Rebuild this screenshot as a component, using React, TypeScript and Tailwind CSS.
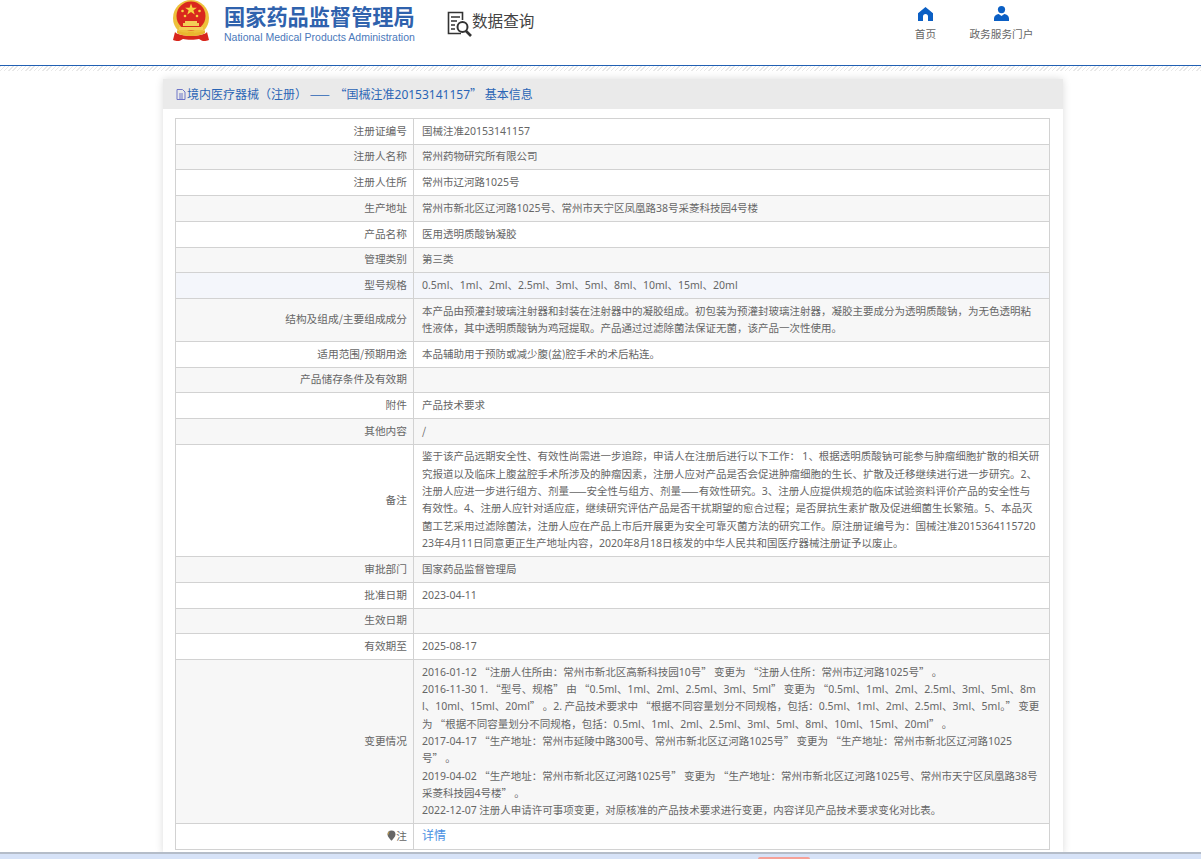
import React from 'react';

const font = { fontFamily: '"Noto Sans CJK SC", sans-serif' };

type Row = { label: React.ReactNode; lines: string[]; bg?: string; link?: boolean };

const rows: Row[] = [
  { label: '注册证编号', lines: ['国械注准20153141157'] },
  { label: '注册人名称', lines: ['常州药物研究所有限公司'] },
  { label: '注册人住所', lines: ['常州市辽河路1025号'] },
  { label: '生产地址', lines: ['常州市新北区辽河路1025号、常州市天宁区凤凰路38号采菱科技园4号楼'] },
  { label: '产品名称', lines: ['医用透明质酸钠凝胶'] },
  { label: '管理类别', lines: ['第三类'] },
  { label: '型号规格', lines: ['0.5ml、1ml、2ml、2.5ml、3ml、5ml、8ml、10ml、15ml、20ml'], bg: 'bg-[#f4f6fb]' },
  {
    label: '结构及组成/主要组成成分',
    lines: [
      '本产品由预灌封玻璃注射器和封装在注射器中的凝胶组成。初包装为预灌封玻璃注射器，凝胶主要成分为透明质酸钠，为无色透明粘',
      '性液体，其中透明质酸钠为鸡冠提取。产品通过过滤除菌法保证无菌，该产品一次性使用。',
    ],
  },
  { label: '适用范围/预期用途', lines: ['本品辅助用于预防或减少腹(盆)腔手术的术后粘连。'] },
  { label: '产品储存条件及有效期', lines: [''] },
  { label: '附件', lines: ['产品技术要求'] },
  { label: '其他内容', lines: ['/'] },
  {
    label: '备注',
    lines: [
      '鉴于该产品远期安全性、有效性尚需进一步追踪，申请人在注册后进行以下工作： 1、根据透明质酸钠可能参与肿瘤细胞扩散的相关研',
      '究报道以及临床上腹盆腔手术所涉及的肿瘤因素，注册人应对产品是否会促进肿瘤细胞的生长、扩散及迁移继续进行进一步研究。2、',
      '注册人应进一步进行组方、剂量——安全性与组方、剂量——有效性研究。3、注册人应提供规范的临床试验资料评价产品的安全性与',
      '有效性。4、注册人应针对适应症，继续研究评估产品是否干扰期望的愈合过程；是否屏抗生素扩散及促进细菌生长繁殖。5、本品灭',
      '菌工艺采用过滤除菌法，注册人应在产品上市后开展更为安全可靠灭菌方法的研究工作。原注册证编号为：国械注准2015364115720',
      '23年4月11日同意更正生产地址内容，2020年8月18日核发的中华人民共和国医疗器械注册证予以废止。',
    ],
  },
  { label: '审批部门', lines: ['国家药品监督管理局'] },
  { label: '批准日期', lines: ['2023-04-11'] },
  { label: '生效日期', lines: [''] },
  { label: '有效期至', lines: ['2025-08-17'] },
  {
    label: '变更情况',
    lines: [
      '2016-01-12 “注册人住所由：常州市新北区高新科技园10号” 变更为 “注册人住所：常州市辽河路1025号” 。',
      '2016-11-30 1. “型号、规格” 由 “0.5ml、1ml、2ml、2.5ml、3ml、5ml” 变更为 “0.5ml、1ml、2ml、2.5ml、3ml、5ml、8m',
      'l、10ml、15ml、20ml” 。2. 产品技术要求中 “根据不同容量划分不同规格，包括：0.5ml、1ml、2ml、2.5ml、3ml、5ml。” 变更',
      '为 “根据不同容量划分不同规格，包括：0.5ml、1ml、2ml、2.5ml、3ml、5ml、8ml、10ml、15ml、20ml” 。',
      '2017-04-17 “生产地址：常州市延陵中路300号、常州市新北区辽河路1025号” 变更为 “生产地址：常州市新北区辽河路1025',
      '号” 。',
      '2019-04-02 “生产地址：常州市新北区辽河路1025号” 变更为 “生产地址：常州市新北区辽河路1025号、常州市天宁区凤凰路38号',
      '采菱科技园4号楼” 。',
      '2022-12-07 注册人申请许可事项变更，对原核准的产品技术要求进行变更，内容详见产品技术要求变化对比表。',
    ],
  },
  {
    label: (
      <span className="inline-flex items-center justify-end">
        <svg width="9" height="11" viewBox="0 0 9 11">
          <path d="M4.5 0.5a4 4 0 0 1 4 4c0 2.6-2.6 4.4-3.6 6h-.8c-1-1.6-3.6-3.4-3.6-6a4 4 0 0 1 4-4z" fill="#666" />
          <path d="M2.4 1.6a4 4 0 0 0-1.3 3" stroke="#c9a24a" fill="none" />
        </svg>
        注
      </span>
    ),
    lines: ['详情'],
    link: true,
  },
];

// digits and latin letters are a bit wider in the original than in the CJK font
const Mixed = ({ text }: { text: string }) => (
  <>
    {text.split(/([0-9A-Za-z.\-]+)/).map((part, i) =>
      i % 2 === 1 ? (
        <span key={i} className="font-['Noto_Sans']">
          {part}
        </span>
      ) : (
        part
      ),
    )}
  </>
);

const Emblem = () => (
  <svg width="38" height="42" viewBox="0 0 38 42" className="shrink-0">
    <path d="M3 32c4 5 28 5 32 0l2 8c-5 2-7 1-10-1-3 1-13 1-16 0-3 2-5 3-10 1z" fill="#d8261c" />
    <circle cx="19" cy="18" r="18" fill="#edc13c" />
    <circle cx="19" cy="16" r="14.5" fill="#d9281e" />
    <path d="M19 3.5l1.5 4.2h4.4l-3.5 2.6 1.3 4.2-3.7-2.6-3.7 2.6 1.3-4.2-3.5-2.6h4.4z" fill="#f6d23f" />
    <circle cx="10.5" cy="11" r="1.3" fill="#f6d23f" />
    <circle cx="13" cy="16" r="1.3" fill="#f6d23f" />
    <circle cx="25" cy="16" r="1.3" fill="#f6d23f" />
    <circle cx="27.5" cy="11" r="1.3" fill="#f6d23f" />
    <path d="M13 21h12v2h2v3H11v-3h2z" fill="#f3cf57" />
    <path d="M7 27h24v3H7z" fill="#f3cf57" />
    <path d="M5 30c5 4 23 4 28 0v3c-5 4-23 4-28 0z" fill="#e9b62f" />
    <path d="M16 32h6v4h-6z" fill="#e9b62f" />
  </svg>
);

const DocSearch = () => (
  <svg width="26" height="27" viewBox="0 0 26 27" fill="none" stroke="#333" className="shrink-0">
    <path d="M14 22.5H1.5v-21h14V9" strokeWidth="1.6" />
    <path d="M4 6h9M4 10h6M4 14h4M4 18h4" strokeWidth="1.3" />
    <circle cx="15.5" cy="16" r="5" strokeWidth="2" />
    <path d="M19 20l5 5" strokeWidth="2.6" />
  </svg>
);

const App: React.FC = () => {
  return (
    <div className="relative h-[859px] overflow-hidden bg-white" style={font}>
      <header className="flex h-[66px] border-b border-[#2160b3]">
        <div className="ml-[172px] flex w-[262px] items-start">
          <Emblem />
          <div className="ml-[14px]">
            <div className="text-[21.2px] font-bold leading-[31px] text-[#2f62ad]">国家药品监督管理局</div>
            <div className="text-[10.5px] leading-[13px] text-[#4a78ba]" style={{ fontFamily: '"Liberation Sans", sans-serif' }}>
              National Medical Products Administration
            </div>
          </div>
        </div>
        <div className="ml-[13px] mt-[11px] flex h-[27px] items-start">
          <DocSearch />
          <span className="-ml-px -mt-[2px] text-[15.6px] leading-[22px] text-[#444]">数据查询</span>
        </div>
        <nav className="ml-[379px] mt-[7px] flex text-[10.67px] text-[#666]">
          <a className="flex w-[24px] flex-col items-center">
            <svg width="15" height="14" viewBox="0 0 15 14" fill="#0b5fc4">
              <path d="M7.5 0L15 6.2V14H10V9.5a2.5 2.5 0 0 0-5 0V14H0V6.2z" />
            </svg>
            <span className="mt-[6px] leading-[14px] whitespace-nowrap">首页</span>
          </a>
          <a className="ml-[32px] flex w-[64px] flex-col items-center">
            <svg width="15" height="15" viewBox="0 0 15 15" fill="#0b5fc4" className="-mt-px">
              <circle cx="7.5" cy="3.6" r="3.6" />
              <path d="M0 15v-2.5c0-2.6 2-4.3 4.7-4.6L7.5 10l2.8-2.1c2.7.3 4.7 2 4.7 4.6V15z" />
            </svg>
            <span className="mt-[6px] leading-[14px] whitespace-nowrap">政务服务门户</span>
          </a>
        </nav>
      </header>
      <div className="h-[5px] bg-[repeating-linear-gradient(135deg,#e8e8e8_0,#e8e8e8_1px,#fff_1px,#fff_3px)]" />

      <main className="ml-[163px] mt-[8px] w-[900px] bg-white shadow-[0_0_8px_rgba(0,0,0,0.14)]">
        <div className="flex h-[30px] items-center bg-[#eaeaea] pl-[13px] pt-px text-[12px] text-[#2a65b5]">
          <svg width="10" height="11" viewBox="0 0 10 11" fill="none" stroke="#6f76c8" className="mr-px">
            <path d="M1 .5h5.5L9 3v7.5H1zM3 5h4M3 7h4M3 9h4" />
          </svg>
          <span>
            境内医疗器械（注册） <span className="tracking-[2px]">——</span> “国械注准<span className="font-['Noto_Sans']">20153141157</span>” 基本信息
          </span>
        </div>
        <div className="px-[12px] pb-[4px] pt-[9px]">
          <table className="w-[875px] table-fixed border-collapse text-[10.5px] leading-[17.33px] text-[#666]">
            <colgroup>
              <col className="w-[238px]" />
              <col />
            </colgroup>
            <tbody>
              {rows.map((row, i) => (
                <tr key={i} className={row.bg ?? (i % 2 === 1 ? 'bg-[#f7f7f7]' : 'bg-white')}>
                  <td className="border border-[#d2d2d2] px-[6px] pb-[4.7px] pt-[2.7px] text-right text-[10.7px]">
                    <div className="h-[17.33px]">{row.label}</div>
                  </td>
                  <td className="border border-[#d2d2d2] pb-[4.7px] pl-[8px] pr-0 pt-[2.7px]">
                    {row.lines.map((line, j) => (
                      <div key={j} className={row.link ? 'h-[17.33px] -translate-y-px text-[12px] text-[#4a90e2]' : 'h-[17.33px] whitespace-nowrap'}>
                        <Mixed text={line} />
                      </div>
                    ))}
                  </td>
                </tr>
              ))}
            </tbody>
          </table>
        </div>
      </main>

      <div className="fixed inset-x-0 bottom-0 h-[7px] border-t-2 border-[#b4bcc8] bg-[#d6e2f7]">
        <div className="ml-[758px] mt-[3px] h-[2px] w-[52px] rounded-t bg-[#f5a198]" />
      </div>
    </div>
  );
};

export default App;
